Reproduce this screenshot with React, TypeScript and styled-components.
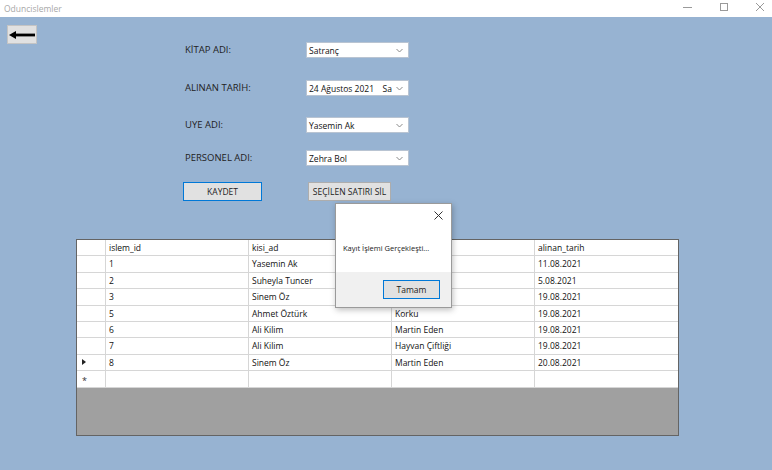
import React from 'react';
import styled, { createGlobalStyle } from 'styled-components';

const GlobalStyle = createGlobalStyle`
    html, body {
        margin: 0;
        padding: 0;
        background: #97b3d2;
    }
    body {
        font-family: 'Open Sans', 'Noto Sans', sans-serif;
        color: #1a1a1a;
    }
`;

/** kitap_ad cells under the message box are hidden in the screenshot */
const ODUNC_ROWS = [
    { id: '1', kisi: 'Yasemin Ak', kitap: '', tarih: '11.08.2021' },
    { id: '2', kisi: 'Suheyla Tuncer', kitap: '', tarih: '5.08.2021' },
    { id: '3', kisi: 'Sinem Öz', kitap: '', tarih: '19.08.2021' },
    { id: '5', kisi: 'Ahmet Öztürk', kitap: 'Korku', tarih: '19.08.2021' },
    { id: '6', kisi: 'Ali Kilim', kitap: 'Martin Eden', tarih: '19.08.2021' },
    { id: '7', kisi: 'Ali Kilim', kitap: 'Hayvan Çiftliği', tarih: '19.08.2021' },
    { id: '8', kisi: 'Sinem Öz', kitap: 'Martin Eden', tarih: '20.08.2021' },
];

const COLUMNS = ['islem_id', 'kisi_ad', '', 'alinan_tarih'];

/** combobox arrow */
const Chevron = () => (
    <svg width="7" height="5" viewBox="0 0 7 5">
        <polyline points="0.5,1 3.5,4 6.5,1" fill="none" stroke="#8a8a8a" strokeWidth="1" />
    </svg>
);

export default function App() {
    return (
        <Window>
            <GlobalStyle />
            <TitleBar>
                <TitleText>Oduncislemler</TitleText>
                <WindowControls>
                    <svg width="10" height="10" viewBox="0 0 10 10">
                        <line x1="0" y1="5.5" x2="9" y2="5.5" stroke="#9a9a9a" strokeWidth="1" />
                    </svg>
                    <svg width="10" height="10" viewBox="0 0 10 10">
                        <rect x="1.5" y="1.5" width="7" height="7" fill="none" stroke="#9a9a9a" strokeWidth="1" />
                    </svg>
                    <svg width="10" height="10" viewBox="0 0 10 10">
                        <path d="M1 1 L9 9 M9 1 L1 9" stroke="#9a9a9a" strokeWidth="1" />
                    </svg>
                </WindowControls>
            </TitleBar>

            <Body>
                <TopArea>
                    <BackButton>
                        <svg width="26" height="10" viewBox="0 0 26 10">
                            <polygon points="0,5 7,1 7,9" fill="#000" />
                            <rect x="6" y="3.6" width="20" height="2.8" fill="#000" />
                        </svg>
                    </BackButton>

                    <Form>
                        <Label>KİTAP ADI:</Label>
                        <Combo>
                            <ComboText>Satranç</ComboText>
                            <Chevron />
                        </Combo>

                        <Label $gap={22}>ALINAN TARİH:</Label>
                        <Combo $gap={22}>
                            <ComboText>24 Ağustos 2021</ComboText>
                            <DayText>Sa</DayText>
                            <Chevron />
                        </Combo>

                        <Label $gap={21}>UYE ADI:</Label>
                        <Combo $gap={21}>
                            <ComboText>Yasemin Ak</ComboText>
                            <Chevron />
                        </Combo>

                        <Label $gap={17}>PERSONEL ADI:</Label>
                        <Combo $gap={17}>
                            <ComboText>Zehra Bol</ComboText>
                            <Chevron />
                        </Combo>

                        <ButtonCell>
                            <FormButton $focused $width={79}>
                                KAYDET
                            </FormButton>
                        </ButtonCell>
                        <ButtonCell>
                            <FormButton $width={83} $shift={2}>
                                SEÇİLEN SATIRI SİL
                            </FormButton>
                        </ButtonCell>
                    </Form>
                </TopArea>

                <DataGrid>
                    <GridRow>
                        <RowHeader />
                        {COLUMNS.map((c, i) => (
                            <Cell key={i}>{c}</Cell>
                        ))}
                    </GridRow>
                    {ODUNC_ROWS.map((r, i) => (
                        <GridRow key={r.id}>
                            <RowHeader>
                                {i === ODUNC_ROWS.length - 1 && (
                                    <svg width="4" height="6" viewBox="0 0 4 6">
                                        <polygon points="0,0 4,3 0,6" fill="#222" />
                                    </svg>
                                )}
                            </RowHeader>
                            <Cell>{r.id}</Cell>
                            <Cell>{r.kisi}</Cell>
                            <Cell>{r.kitap}</Cell>
                            <Cell>{r.tarih}</Cell>
                        </GridRow>
                    ))}
                    <GridRow>
                        <RowHeader>
                            <NewRowMark>*</NewRowMark>
                        </RowHeader>
                        <Cell />
                        <Cell />
                        <Cell />
                        <Cell />
                    </GridRow>
                    <EmptyArea />
                </DataGrid>

                <MessageBox>
                    <MessageTop>
                        <CloseRow>
                            <svg width="9" height="9" viewBox="0 0 9 9">
                                <path d="M0.5 0.5 L8.5 8.5 M8.5 0.5 L0.5 8.5" stroke="#333" strokeWidth="1" />
                            </svg>
                        </CloseRow>
                        <MessageText>Kayıt İşlemi Gerçekleşti...</MessageText>
                    </MessageTop>
                    <MessageFooter>
                        <FormButton $focused $width={57}>
                            Tamam
                        </FormButton>
                    </MessageFooter>
                </MessageBox>
            </Body>
        </Window>
    );
}

const Window = styled.div`
    width: 772px;
    height: 470px;
    display: flex;
    flex-direction: column;
    overflow: hidden;
`;

const TitleBar = styled.div`
    height: 17px;
    background: #ffffff;
    display: flex;
    align-items: center;
    justify-content: space-between;
    padding: 0 7px 0 4px;
    box-sizing: border-box;
`;

const TitleText = styled.div`
    font-size: 8.5px;
    color: #a8a8a8;
    margin-top: -1px;
`;

const WindowControls = styled.div`
    display: flex;
    align-items: center;
    gap: 26px;
    margin-top: -3px;
`;

const Body = styled.div`
    flex: 1;
    position: relative;
    background: #97b3d2;
    display: flex;
    flex-direction: column;
`;

const TopArea = styled.div`
    display: flex;
    align-items: flex-start;
    padding: 8px 0 0 7px;
`;

const BackButton = styled.div`
    width: 30px;
    height: 19px;
    box-sizing: border-box;
    background: #e1e1e1;
    border: 1px solid #c4c4c4;
    display: flex;
    align-items: center;
    justify-content: center;
`;

const Form = styled.div`
    margin: 17px 0 0 146px;
    display: grid;
    grid-template-columns: 123px 103px;
    align-items: center;
`;

const Label = styled.div<{ $gap?: number }>`
    margin-top: ${(p) => p.$gap ?? 0}px;
    padding-left: 2px;
    font-size: 9.5px;
    color: #222;
    line-height: 16px;
`;

const Combo = styled.div<{ $gap?: number }>`
    margin-top: ${(p) => p.$gap ?? 0}px;
    height: 16px;
    box-sizing: border-box;
    background: #ffffff;
    border: 1px solid #b9c4d2;
    display: flex;
    align-items: center;
    padding: 0 5px 0 2px;
    gap: 4px;
`;

const ComboText = styled.span`
    flex: 1;
    font-size: 8.5px;
    color: #111;
    white-space: nowrap;
`;

const DayText = styled.span`
    font-size: 8.5px;
    color: #111;
`;

const ButtonCell = styled.div`
    margin-top: 16px;
`;

const FormButton = styled.div<{ $focused?: boolean; $width: number; $shift?: number }>`
    width: ${(p) => p.$width}px;
    height: 19px;
    margin-left: ${(p) => p.$shift ?? 0}px;
    box-sizing: border-box;
    background: #e1e1e1;
    border: 1px solid ${(p) => (p.$focused ? '#0078d7' : '#adadad')};
    display: flex;
    align-items: center;
    justify-content: center;
    font-size: 8.5px;
    color: #222;
    white-space: nowrap;
`;

const DataGrid = styled.div`
    margin: 38px 0 0 76px;
    width: 603px;
    height: 197px;
    box-sizing: border-box;
    border: 1px solid #646464;
    background: #a0a0a0;
    display: flex;
    flex-direction: column;
`;

const GridRow = styled.div`
    display: grid;
    grid-template-columns: 29px repeat(4, 143px);
    height: 16.4px;
    background: #ffffff;
    flex-shrink: 0;
`;

const RowHeader = styled.div`
    border-right: 1px solid #d6d6d6;
    border-bottom: 1px solid #d6d6d6;
    display: flex;
    align-items: center;
    padding-left: 5px;
`;

const NewRowMark = styled.span`
    font-size: 9px;
    line-height: 1;
    margin-top: 3px;
    color: #333;
`;

const Cell = styled.div`
    border-right: 1px solid #d6d6d6;
    border-bottom: 1px solid #d6d6d6;
    font-size: 8.5px;
    line-height: 15px;
    padding-left: 3px;
    color: #111;
    white-space: nowrap;
    overflow: hidden;
    &:last-child {
        border-right: none;
    }
`;

const EmptyArea = styled.div`
    flex: 1;
    background: #a0a0a0;
`;

const MessageBox = styled.div`
    position: absolute;
    left: 335px;
    top: 186px;
    width: 117px;
    height: 105px;
    box-sizing: border-box;
    background: #ffffff;
    border: 1px solid #9a9a9a;
    box-shadow: 1px 2px 6px rgba(0, 0, 0, 0.25);
    display: flex;
    flex-direction: column;
`;

const MessageTop = styled.div`
    flex: 1;
    display: flex;
    flex-direction: column;
`;

const CloseRow = styled.div`
    display: flex;
    justify-content: flex-end;
    padding: 7px 8px 0 0;
`;

const MessageText = styled.div`
    margin: 23px 0 0 7px;
    font-size: 7.5px;
    color: #222;
    white-space: nowrap;
`;

const MessageFooter = styled.div`
    height: 35px;
    background: #f0f0f0;
    display: flex;
    justify-content: flex-end;
    align-items: flex-start;
    padding: 8px 11px 0 0;
    box-sizing: border-box;
`;
